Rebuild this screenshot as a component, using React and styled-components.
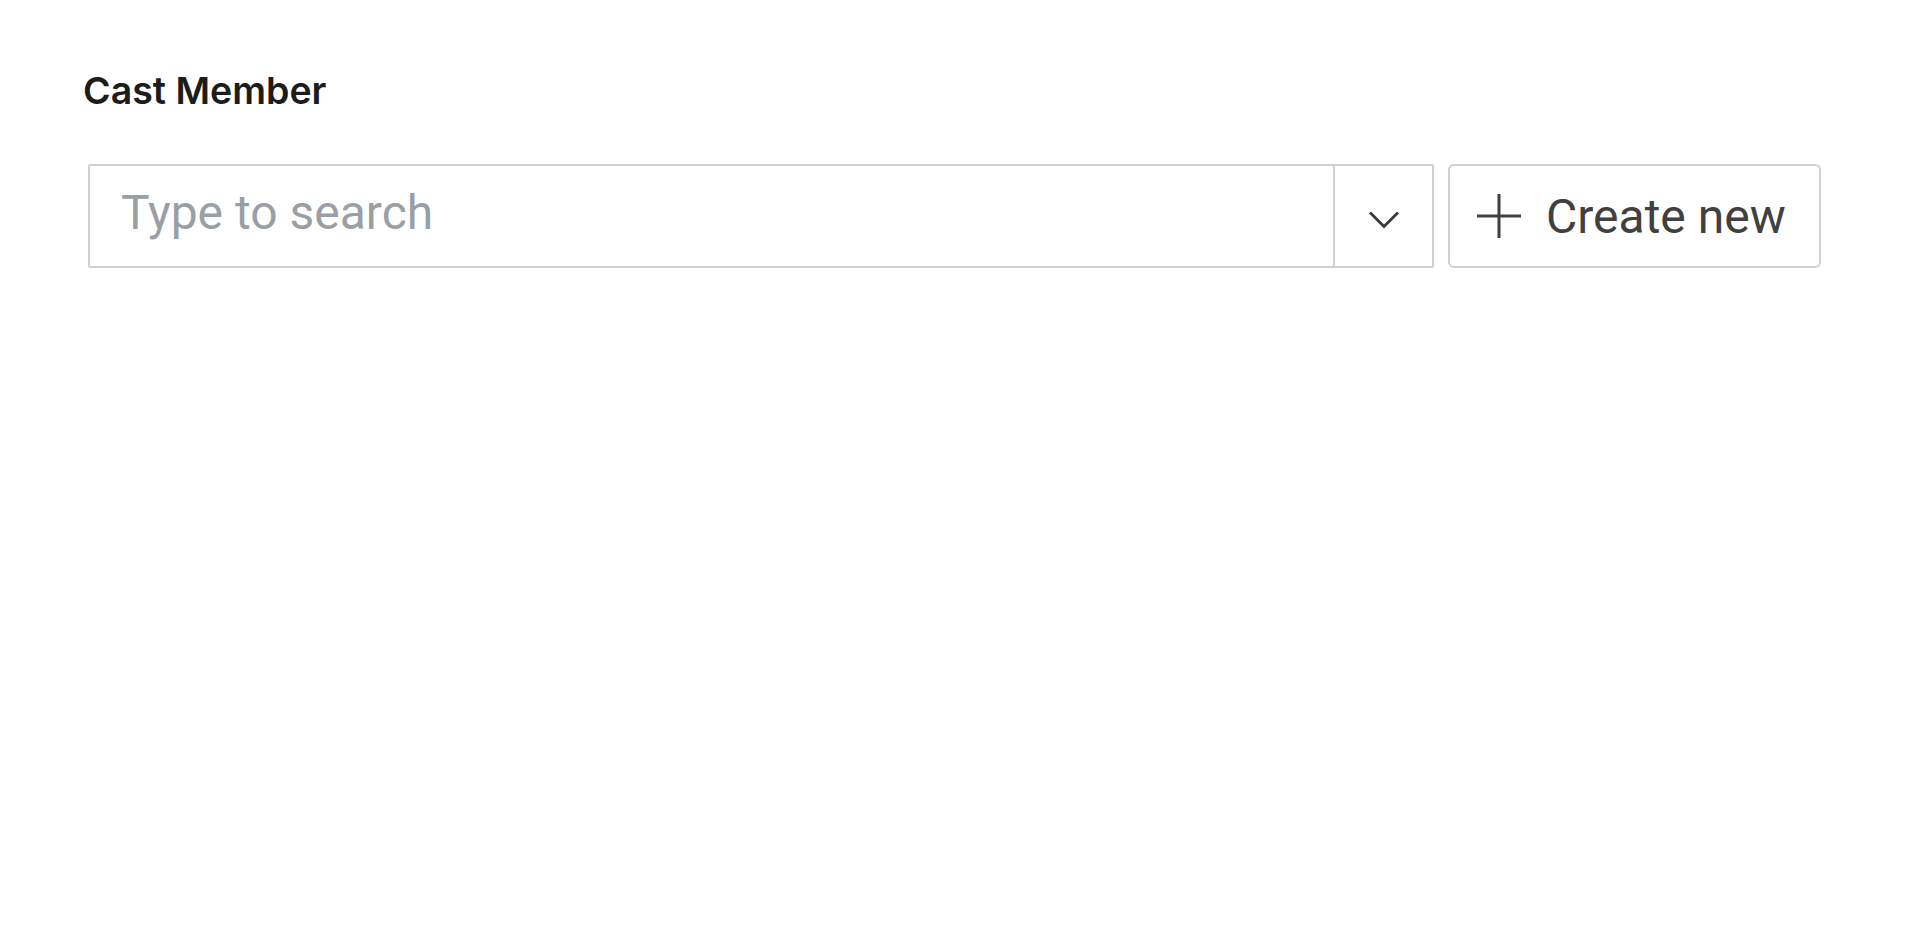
import React from "react";
import styled, { createGlobalStyle } from "styled-components";

const GlobalStyle = createGlobalStyle`
  html, body {
    margin: 0;
    background: #ffffff;
    font-family: "Inter", "Roboto", sans-serif;
  }
`;

const Page = styled.div`
  padding: 69px 99px 0 83px;
`;

const Label = styled.label`
  display: block;
  font-size: 37.5px;
  line-height: 44px;
  font-weight: 600;
  color: #1c1c1c;
  margin-bottom: 51px;
`;

const Row = styled.div`
  display: flex;
  gap: 14px;
  padding-left: 5px;
`;

const Combo = styled.div`
  flex: 1;
  display: flex;
  height: 104px;
  box-sizing: border-box;
  border: 2px solid #d0d0d0;
  border-radius: 2px;
`;

const SearchInput = styled.input`
  flex: 1;
  min-width: 0;
  border: none;
  outline: none;
  background: transparent;
  padding: 0 0 8px 31px;
  font-family: "Roboto", "Inter", sans-serif;
  font-size: 48px;
  color: #333;

  &::placeholder {
    color: #9a9fa6;
  }
`;

const Toggle = styled.button`
  width: 99px;
  border: none;
  border-left: 2px solid #d0d0d0;
  background: transparent;
  display: flex;
  align-items: center;
  justify-content: center;
  padding: 8px 0 0;
  color: #3a3a3a;
`;

const CreateButton = styled.button`
  width: 373px;
  height: 104px;
  box-sizing: border-box;
  border: 2px solid #d0d0d0;
  border-radius: 6px;
  background: #fff;
  display: flex;
  align-items: center;
  gap: 25px;
  padding: 0 0 0 27px;
  font-family: "Roboto", "Inter", sans-serif;
  font-size: 48px;
  color: #404040;
`;

const Chevron = () => (
  <svg width="32" height="20" viewBox="0 0 32 20" fill="none">
    <path d="M2 2.5 L16 16.5 L30 2.5" stroke="currentColor" strokeWidth="2.8" />
  </svg>
);

const Plus = () => (
  <svg width="44" height="44" viewBox="0 0 44 44" fill="none">
    <path d="M22 0 V44 M0 22 H44" stroke="currentColor" strokeWidth="3" />
  </svg>
);

const App = () => (
  <>
    <GlobalStyle />
    <Page>
      <Label>Cast Member</Label>
      <Row>
        <Combo>
          <SearchInput placeholder="Type to search" />
          <Toggle>
            <Chevron />
          </Toggle>
        </Combo>
        <CreateButton>
          <Plus />
          Create new
        </CreateButton>
      </Row>
    </Page>
  </>
);

export default App;
